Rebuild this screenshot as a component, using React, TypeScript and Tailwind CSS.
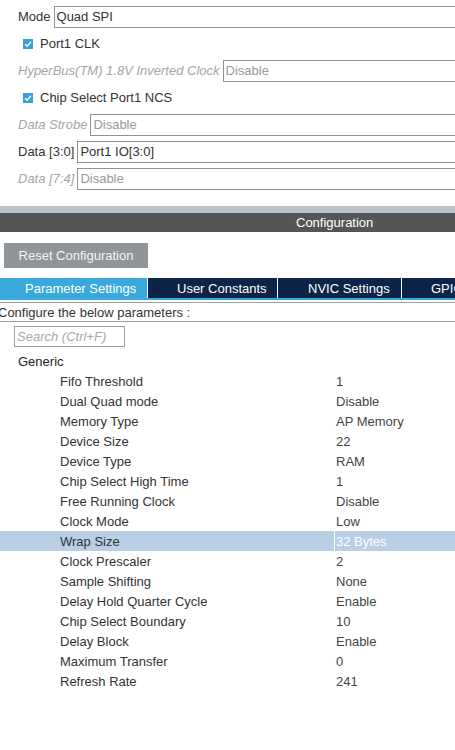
import React from "react";

// --- Données ---
type Field = {
  label: string;
  value?: string;
  disabled?: boolean;
  check?: boolean;
};

const FIELDS: Field[] = [
  { label: "Mode", value: "Quad SPI" },
  { label: "Port1 CLK", check: true },
  { label: "HyperBus(TM) 1.8V Inverted Clock", value: "Disable", disabled: true },
  { label: "Chip Select Port1 NCS", check: true },
  { label: "Data Strobe", value: "Disable", disabled: true },
  { label: "Data [3:0]", value: "Port1 IO[3:0]" },
  { label: "Data [7:4]", value: "Disable", disabled: true },
];

const PARAMS: [string, string][] = [
  ["Fifo Threshold", "1"],
  ["Dual Quad mode", "Disable"],
  ["Memory Type", "AP Memory"],
  ["Device Size", "22"],
  ["Device Type", "RAM"],
  ["Chip Select High Time", "1"],
  ["Free Running Clock", "Disable"],
  ["Clock Mode", "Low"],
  ["Wrap Size", "32 Bytes"],
  ["Clock Prescaler", "2"],
  ["Sample Shifting", "None"],
  ["Delay Hold Quarter Cycle", "Enable"],
  ["Chip Select Boundary", "10"],
  ["Delay Block", "Enable"],
  ["Maximum Transfer", "0"],
  ["Refresh Rate", "241"],
];

const TABS = [
  { label: "Parameter Settings", cls: "w-[148px] pl-[25px]", active: true },
  { label: "User Constants", cls: "w-[130px] pl-[29px]" },
  { label: "NVIC Settings", cls: "w-[124px] pl-[30px]" },
  { label: "GPIO Settings", cls: "w-[160px] pl-[29px]" },
];

const SELECTED = "Wrap Size";

// --- Composants ---
function CheckBox() {
  return (
    <span className="w-[10px] h-[10px] bg-[#3a9fd6] flex items-center justify-center shrink-0">
      <svg width="8" height="8" viewBox="0 0 8 8">
        <path d="M1 4.2 L3.1 6.2 L7 1.8" stroke="white" strokeWidth="1.4" fill="none" />
      </svg>
    </span>
  );
}

function FieldRow({ f }: { f: Field }) {
  if (f.check) {
    return (
      <div className="h-[27px] flex items-center pl-[23px] gap-[7px] text-[#333]">
        <CheckBox />
        <span>{f.label}</span>
      </div>
    );
  }
  return (
    <div className="h-[27px] flex items-center pl-[18px]">
      <span className={f.disabled ? "italic text-[#a6a6a6] whitespace-nowrap" : "text-[#333] whitespace-nowrap"}>
        {f.label}
      </span>
      <div
        className={
          "ml-[3px] flex-1 h-[22px] border border-r-0 border-[#8d9499] flex items-center pl-[2px] whitespace-nowrap " +
          (f.disabled ? "text-[#9a9a9a]" : "text-[#333]")
        }
      >
        {f.value}
      </div>
    </div>
  );
}

export default function App() {
  return (
    <div className="w-[455px] h-[750px] overflow-hidden bg-white text-[13px] leading-none font-['Liberation_Sans',Arial,sans-serif]">
      {/* Mode / signaux */}
      <div className="pt-[3px]">
        {FIELDS.map((f) => (
          <FieldRow key={f.label} f={f} />
        ))}
      </div>

      {/* Barre Configuration */}
      <div className="mt-[14px] h-[7px] bg-[#b9c3c9]" />
      <div className="h-[19px] bg-[#545656] flex items-center pl-[296px] text-white whitespace-nowrap">
        Configuration
      </div>

      <div className="pt-[11px] pl-[4px]">
        <div className="w-[144px] h-[25px] bg-[#8f959a] text-[#f4f4f4] flex items-center justify-center">
          Reset Configuration
        </div>
      </div>

      {/* Onglets */}
      <div className="mt-[10px] flex h-[20px] whitespace-nowrap">
        {TABS.map((t) => (
          <div
            key={t.label}
            className={
              "shrink-0 flex items-center text-white border-r border-white " +
              t.cls +
              (t.active ? " bg-[#39a9dc]" : " bg-[#0c2447]")
            }
          >
            {t.label}
          </div>
        ))}
      </div>
      <div className="h-[2px] bg-[#39a9dc]" />
      <div className="h-[2px]" />
      <div className="h-px bg-[#9aa0a4]" />

      <div className="h-[18px] flex items-center -ml-[2px] text-[#333] whitespace-nowrap">
        Configure the below parameters :
      </div>
      <div className="h-px bg-[#9aa0a4]" />

      <div className="pt-[4px] pl-[14px]">
        <div className="w-[111px] h-[21px] border border-[#9aa0a4] flex items-center pl-[2px] italic text-[#a8a8a8]">
          Search (Ctrl+F)
        </div>
      </div>

      {/* Paramètres */}
      <div className="mt-[4px]">
        <div className="h-[20px] flex items-center pl-[18px] text-[#222]">Generic</div>
        {PARAMS.map(([k, v]) => {
          const sel = k === SELECTED;
          return (
            <div key={k} className={"h-[20px] flex " + (sel ? "bg-[#b8cfe6]" : "")}>
              <div className="w-[334px] pl-[60px] flex items-center text-[#333] whitespace-nowrap">{k}</div>
              <div
                className={
                  "flex-1 pl-[1px] flex items-center border-l " +
                  (sel ? "border-white text-white" : "border-transparent text-[#444]")
                }
              >
                {v}
              </div>
            </div>
          );
        })}
      </div>
    </div>
  );
}
